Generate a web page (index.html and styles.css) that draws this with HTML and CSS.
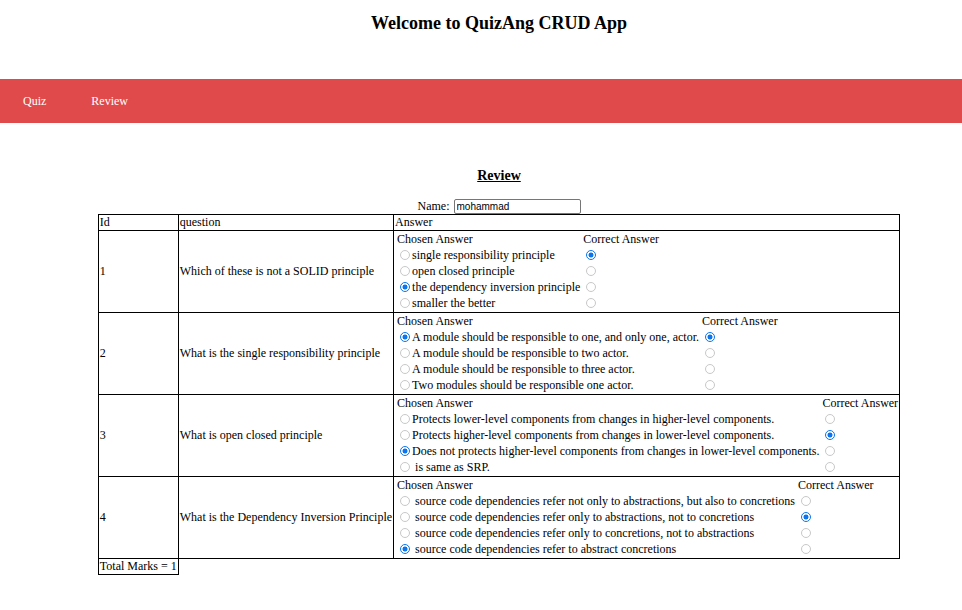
FILE: index.html
```html
<!DOCTYPE html>
<html lang="en">
<head>
<meta charset="utf-8">
<title>QuizAng</title>
<link rel="stylesheet" href="styles.css">
</head>
<body>
<header class="site-title"><h1>Welcome to QuizAng CRUD App</h1></header>
<nav class="topnav"><a href="#">Quiz</a><a href="#">Review</a></nav>
<main class="review">
  <h2>Review</h2>
  <div class="name-row"><label for="nm">Name:</label><input id="nm" class="name-input" type="text" value="mohammad"></div>
  <table class="results">
    <tr class="head"><td class="c">Id</td><td class="c">question</td><td class="c">Answer</td></tr>
    <tr>
      <td class="c">1</td>
      <td class="c">Which of these is not a SOLID principle</td>
      <td class="c ans-cell">
        <table class="ans">
          <tr><td class="ch">Chosen Answer</td><td>Correct Answer</td></tr>
          <tr><td class="ch"><input class="rb" type="radio" name="q1c"><span>single responsibility principle</span></td><td><input class="rb" type="radio" name="q1k" checked></td></tr>
          <tr><td class="ch"><input class="rb" type="radio" name="q1c"><span>open closed principle</span></td><td><input class="rb" type="radio" name="q1k"></td></tr>
          <tr><td class="ch"><input class="rb" type="radio" name="q1c" checked><span>the dependency inversion principle</span></td><td><input class="rb" type="radio" name="q1k"></td></tr>
          <tr><td class="ch"><input class="rb" type="radio" name="q1c"><span>smaller the better</span></td><td><input class="rb" type="radio" name="q1k"></td></tr>
        </table>
      </td>
    </tr>
    <tr>
      <td class="c">2</td>
      <td class="c">What is the single responsibility principle</td>
      <td class="c ans-cell">
        <table class="ans">
          <tr><td class="ch">Chosen Answer</td><td>Correct Answer</td></tr>
          <tr><td class="ch"><input class="rb" type="radio" name="q2c" checked><span>A module should be responsible to one, and only one, actor.</span></td><td><input class="rb" type="radio" name="q2k" checked></td></tr>
          <tr><td class="ch"><input class="rb" type="radio" name="q2c"><span>A module should be responsible to two actor.</span></td><td><input class="rb" type="radio" name="q2k"></td></tr>
          <tr><td class="ch"><input class="rb" type="radio" name="q2c"><span>A module should be responsible to three actor.</span></td><td><input class="rb" type="radio" name="q2k"></td></tr>
          <tr><td class="ch"><input class="rb" type="radio" name="q2c"><span>Two modules should be responsible one actor.</span></td><td><input class="rb" type="radio" name="q2k"></td></tr>
        </table>
      </td>
    </tr>
    <tr>
      <td class="c">3</td>
      <td class="c">What is open closed principle</td>
      <td class="c ans-cell">
        <table class="ans">
          <tr><td class="ch">Chosen Answer</td><td>Correct Answer</td></tr>
          <tr><td class="ch"><input class="rb" type="radio" name="q3c"><span>Protects lower-level components from changes in higher-level components.</span></td><td><input class="rb" type="radio" name="q3k"></td></tr>
          <tr><td class="ch"><input class="rb" type="radio" name="q3c"><span>Protects higher-level components from changes in lower-level components.</span></td><td><input class="rb" type="radio" name="q3k" checked></td></tr>
          <tr><td class="ch"><input class="rb" type="radio" name="q3c" checked><span>Does not protects higher-level components from changes in lower-level components.</span></td><td><input class="rb" type="radio" name="q3k"></td></tr>
          <tr><td class="ch"><input class="rb" type="radio" name="q3c"> <span>is same as SRP.</span></td><td><input class="rb" type="radio" name="q3k"></td></tr>
        </table>
      </td>
    </tr>
    <tr>
      <td class="c">4</td>
      <td class="c">What is the Dependency Inversion Principle</td>
      <td class="c ans-cell">
        <table class="ans">
          <tr><td class="ch">Chosen Answer</td><td>Correct Answer</td></tr>
          <tr><td class="ch"><input class="rb" type="radio" name="q4c"> <span>source code dependencies refer not only to abstractions, but also to concretions</span></td><td><input class="rb" type="radio" name="q4k"></td></tr>
          <tr><td class="ch"><input class="rb" type="radio" name="q4c"> <span>source code dependencies refer only to abstractions, not to concretions</span></td><td><input class="rb" type="radio" name="q4k" checked></td></tr>
          <tr><td class="ch"><input class="rb" type="radio" name="q4c"> <span>source code dependencies refer only to concretions, not to abstractions</span></td><td><input class="rb" type="radio" name="q4k"></td></tr>
          <tr><td class="ch"><input class="rb" type="radio" name="q4c" checked> <span>source code dependencies refer to abstract concretions</span></td><td><input class="rb" type="radio" name="q4k"></td></tr>
        </table>
      </td>
    </tr>
    <tr class="total-row"><td class="c">Total Marks = 1</td></tr>
  </table>
</main>
</body>
</html>
```

FILE: styles.css
```css
body {
  margin: 0;
  font-family: "Liberation Serif", "Times New Roman", serif;
  color: #000;
  background: #fff;
}

.site-title {
  padding-left: 36px;
  text-align: center;
}

.site-title h1 {
  margin: 0;
  padding-top: 13px;
  font-size: 18px;
  line-height: 21px;
  font-weight: bold;
}

.topnav {
  margin-top: 45px;
  height: 44px;
  background: #e04a4a;
  display: flex;
  align-items: center;
  gap: 45px;
  padding-left: 23px;
}

.topnav a {
  color: #fff;
  font-size: 12px;
  text-decoration: none;
}

.review {
  padding-left: 36px;
}

.review h2 {
  margin: 45px 0 0;
  text-align: center;
  font-size: 14px;
  line-height: 16px;
  font-weight: bold;
  text-decoration: underline;
}

.name-row {
  display: flex;
  justify-content: center;
  align-items: center;
  gap: 4px;
  height: 16px;
  margin-top: 14px;
  font-size: 12px;
}

.name-input {
  width: 127px;
  height: 15px;
  box-sizing: border-box;
  border: 1px solid #767676;
  border-radius: 2px;
  font: 10px "Liberation Sans", Arial, sans-serif;
  padding: 0 2px;
  margin: 0;
}

.results {
  margin: 0 auto;
  border-collapse: collapse;
  font-size: 12px;
}

.results td.c {
  border: 1px solid #000;
  padding: 0 1px;
  vertical-align: middle;
  line-height: 15px;
  white-space: nowrap;
}

.results td.ans-cell {
  padding: 0 1px 1px;
}

.ans {
  border-collapse: separate;
  border-spacing: 0;
  margin: 0 0 0 2px;
  font-size: 12px;
}

.ans td {
  padding: 0;
  height: 16px;
  line-height: 16px;
  white-space: nowrap;
  vertical-align: middle;
}

.ans td.ch {
  padding-right: 3px;
}

.rb {
  -webkit-appearance: none;
  appearance: none;
  box-sizing: border-box;
  width: 10px;
  height: 10px;
  margin: 0 2px 0 3px;
  border: 1px solid #c8c8c8;
  border-radius: 50%;
  background: #fff;
  vertical-align: -1px;
}

.rb:checked {
  border: 1.5px solid #0b74ef;
  background: radial-gradient(circle, #0b74ef 0 2.2px, #fff 2.8px);
}
```
